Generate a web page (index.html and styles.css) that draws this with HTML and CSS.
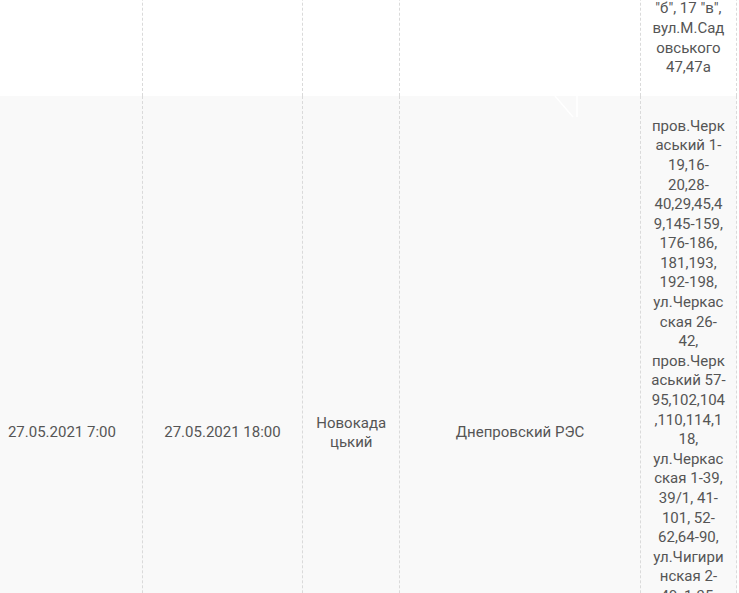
FILE: index.html
```html
<!DOCTYPE html>
<html lang="uk">
<head>
  <meta charset="UTF-8">
  <meta name="viewport" content="width=device-width, initial-scale=1.0">
  <title>Графік відключень</title>
  <link rel="stylesheet" href="styles.css">
</head>
<body>
  <div class="schedule">
    <table>
      <colgroup>
        <col class="col-start">
        <col class="col-end">
        <col class="col-town">
        <col class="col-res">
        <col class="col-streets">
      </colgroup>
      <tbody>
        <tr>
          <td>27.05.2021 7:00</td>
          <td>27.05.2021 18:00</td>
          <td>Новокадацький</td>
          <td>Днепровский РЭС</td>
          <td>вул.Шевченка 2-18, 1-27, вул.Гоголя 5-33, вул.Садова 1-15, 2-28, 30/1, 17 "а", 17 "б", 17 "в", вул.М.Садовського 47,47а</td>
        </tr>
        <tr class="odd">
          <td>27.05.2021 7:00</td>
          <td>27.05.2021 18:00</td>
          <td>Новокадацький</td>
          <td>Днепровский РЭС</td>
          <td>пров.Черкаський 1-19,16-20,28-40,29,45,49,145-159, 176-186, 181,193, 192-198, ул.Черкасская 26-42, пров.Черкаський 57-95,102,104,110,114,118, ул.Черкасская 1-39, 39/1, 41-101, 52-62,64-90, ул.Чигиринская 2-40, 1-35, пров.Чигиринский 3-17, 21,23, ул.Кременчуцкая 1-25, 2-30</td>
        </tr>
      </tbody>
    </table>
  </div>

  <!-- little white mark over the second row -->
  <svg class="mark" width="30" height="26" viewBox="0 0 30 26">
    <path d="M2 1 L20 22 M24 1 L24 22" stroke="#fff" stroke-width="1.5" fill="none"/>
  </svg>
</body>
</html>
```

FILE: styles.css
```css
body {
  margin: 0;
  padding: 0;
  background-color: #fff;
  font-family: Roboto, "Noto Sans", Arial, sans-serif;
  overflow: hidden;
}

.schedule {
  margin-top: -198px;
  margin-left: -18px;
}

table {
  width: 755px;
  border-collapse: collapse;
  table-layout: fixed;
}

.col-start,
.col-end {
  width: 160px;
}

.col-town {
  width: 97px;
}

.col-res {
  width: 240px;
}

.col-streets {
  width: 96px;
}

table td {
  padding: 21px 10px 18px;
  text-align: center;
  vertical-align: middle;
  font-size: 15px;
  line-height: 19.6px;
  color: #555;
  overflow-wrap: break-word;
  border-left: 1px dashed #dadada;
}

table td:first-child {
  border-left: none;
}

table td:last-child {
  border-right: 1px dashed #dadada;
}

table tr.odd {
  background-color: #f9f9f9;
}

table tr.odd td:last-child {
  padding-bottom: 24px;
}

.mark {
  position: absolute;
  left: 553px;
  top: 95px;
}
```
